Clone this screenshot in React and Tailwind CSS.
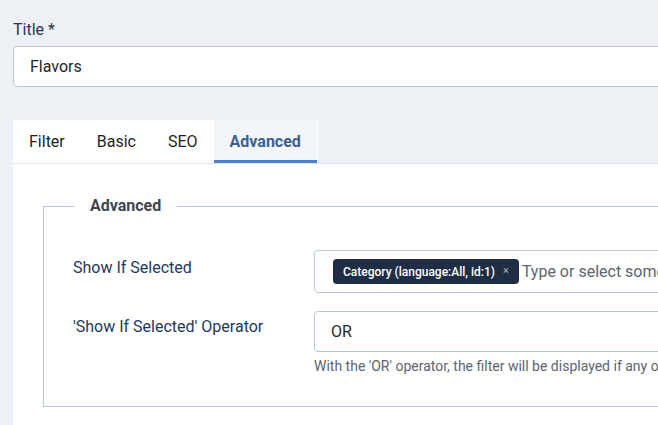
export default function App() {
  const tabs = ["Filter", "Basic", "SEO", "Advanced"];
  return (
    <div className="w-[658px] h-[425px] overflow-hidden bg-[#edf1f6] pl-[13px] pt-[18px] font-['Roboto','Liberation_Sans',sans-serif]">
      <label className="block text-[16px] leading-6 text-[#22395b] mb-[4px]">Title *</label>
      <div className="w-[700px] h-[41px] flex items-center pl-[16px] bg-white border border-[#b9c7da] rounded-[4px] text-[16px] text-[#22262b]">
        Flavors
      </div>

      <div className="mt-[33px] flex w-[305px] bg-white">
        {tabs.map((t) => (
          <div
            key={t}
            className={
              t === "Advanced"
                ? "h-[43px] px-4 flex items-center border-b-[3px] border-[#4f80c6] bg-[#f2f5f9] text-[16px] font-bold text-[#3d5f8f] pt-[3px]"
                : "h-[43px] px-4 flex items-center border-b-[3px] border-transparent text-[16px] text-[#1d1f22] pt-[3px]"
            }
          >
            {t}
          </div>
        ))}
      </div>

      <div className="w-[700px] bg-white border-t border-[#dde4ee] pt-[30px] pl-[30px] pb-[20px]">
        <fieldset className="border border-[#b7c6db] pl-[29px] pt-[32px] pb-[30px]">
          <legend className="ml-[1px] px-4 text-[16px] leading-6 font-bold text-[#3f4550]">Advanced</legend>

          <div className="flex mb-[18px]">
            <div className="w-[241px] pt-[6px] text-[16px] leading-6 text-[#22395b]">Show If Selected</div>
            <div className="w-[400px] h-[43px] flex items-center pl-[18px] border border-[#b9c7da] rounded-[4px] bg-white">
              <span className="h-[25px] flex items-center pl-[10px] pr-[10px] rounded-[4px] bg-[#1f2d45] text-[12px] font-medium text-white whitespace-nowrap">
                Category (language:All, id:1)
                <span className="ml-[8px] text-[11px] font-normal text-[#a9b3c1]">×</span>
              </span>
              <span className="ml-[3px] text-[16px] text-[#5c6571] whitespace-nowrap">Type or select some options</span>
            </div>
          </div>

          <div className="flex">
            <div className="w-[241px] pt-[4px] text-[16px] leading-6 text-[#22395b]">'Show If Selected' Operator</div>
            <div className="flex flex-col">
              <div className="w-[400px] h-[41px] flex items-center pl-[16px] border border-[#b9c7da] rounded-[4px] bg-white text-[16px] text-[#22262b]">
                OR
              </div>
              <div className="mt-[4px] text-[14px] leading-5 text-[#5b6470] whitespace-nowrap">
                With the 'OR' operator, the filter will be displayed if any of the selected items match.
              </div>
            </div>
          </div>
        </fieldset>
      </div>
    </div>
  );
}
